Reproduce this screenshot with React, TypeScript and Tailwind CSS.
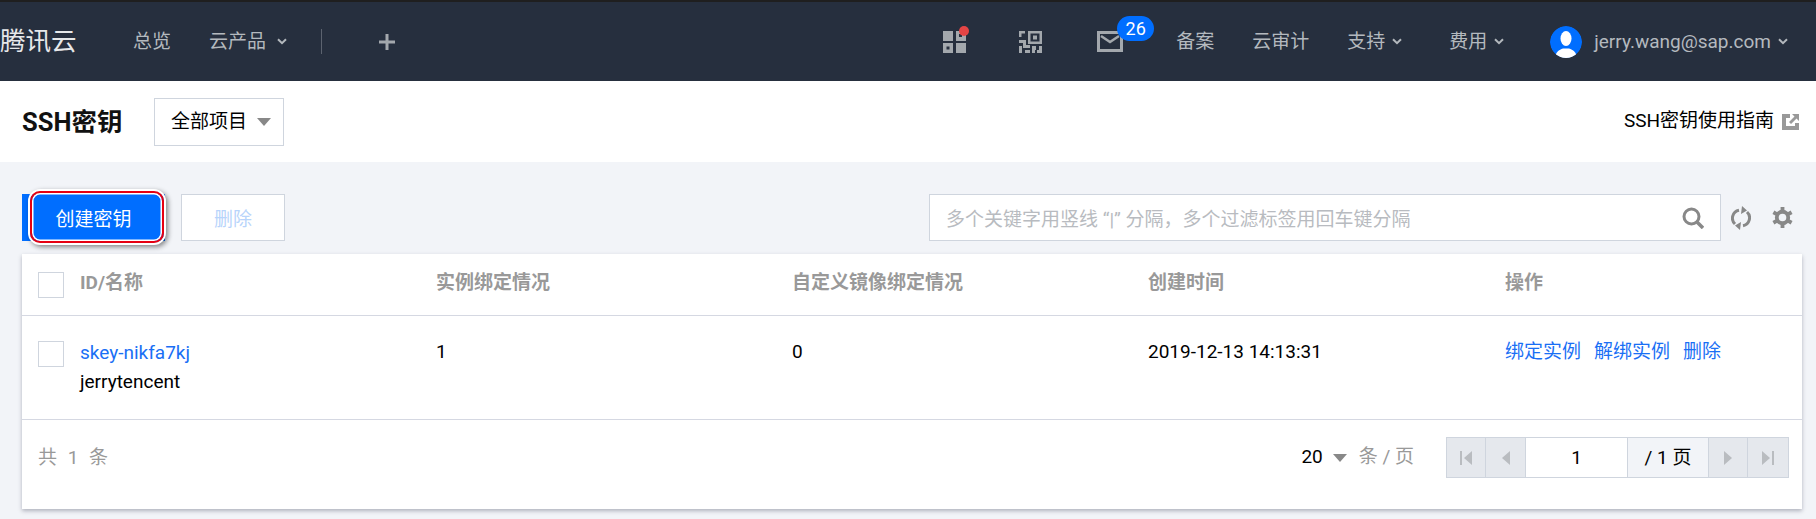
const Chevron = ({ className = "" }: { className?: string }) => (
  <svg viewBox="0 0 10 7" className={`w-[10px] h-[7px] ${className}`}>
    <path d="M1 1.2 5 5.2 9 1.2" fill="none" stroke="#b3b8bd" strokeWidth="2" />
  </svg>
);

const Caret = ({ className = "" }: { className?: string }) => (
  <svg viewBox="0 0 14 8" className={`w-[14px] h-[8px] ${className}`}>
    <path d="M0 0h14L7 8z" fill="#888" />
  </svg>
);

const GridIcon = () => (
  <svg viewBox="0 0 23 22" className="w-[23px] h-[22px]">
    <path d="M0 0h10v10H0zM13 0h10v10H13zM0 12h10v10H0zM13 12h10v10H13z" fill="#a3a8ad" />
    <path d="M3.500 15.500h3v3h-3zM16 3h3v3h-3z" fill="#262f3e" />
  </svg>
);

const QrIcon = () => (
  <svg viewBox="0 0 23 22" className="w-[23px] h-[22px]">
    <path
      d="M0 0h6v2.500H2.500V6H0zM9 0h14v13H9zM0 9h7v5h4v3H4v-5H0zM0 15h3v7H0zM6 19h5v3H6zM13 15h4v4h3v-4h3v7h-5v-3h-2v3h-3z"
      fill="#a3a8ad"
    />
    <path d="M11.500 2.500h9v8h-9z" fill="#262f3e" />
    <path d="M14 4.500h4v4h-4z" fill="#a3a8ad" />
  </svg>
);

const MailIcon = () => (
  <svg viewBox="0 0 26 21" className="w-[26px] h-[21px]">
    <path d="M1.500 1.500h23v18h-23z" fill="none" stroke="#a3a8ad" strokeWidth="3" />
    <path d="M4 5l9 6 9-6" fill="none" stroke="#a3a8ad" strokeWidth="2.500" />
  </svg>
);

const Avatar = () => (
  <svg viewBox="0 0 32 32" className="w-8 h-8 ml-[46px] rounded-full">
    <circle cx="16" cy="16" r="16" fill="#006eff" />
    <ellipse cx="16" cy="12.500" rx="5.500" ry="7.500" fill="#fff" />
    <path d="M5 32c.5-6 4-8 8-9.500h6c4 1.500 7.500 3.500 8 9.500z" fill="#fff" />
  </svg>
);

const ExternalIcon = () => (
  <svg viewBox="0 0 17 16" className="w-[17px] h-4 ml-2">
    <path d="M0 0h8v4H4v8h9V9h4v7H0z" fill="#999" />
    <path d="M10 0h7v7l-2.500-2.500L9 10 7 8l5.500-5.500z" fill="#999" />
  </svg>
);

const SearchIcon = () => (
  <svg viewBox="0 0 22 22" className="w-[22px] h-[22px] mr-[16px]">
    <circle cx="9.500" cy="9.500" r="7.500" fill="none" stroke="#888" strokeWidth="3" />
    <path d="M15 15l6 6" stroke="#888" strokeWidth="3.500" />
  </svg>
);

const RefreshIcon = () => (
  <svg viewBox="0 0 20 24" className="w-5 h-6 ml-[10px]">
    <path d="M4 18A8 8 0 0 1 8 4.300" fill="none" stroke="#888" strokeWidth="3" />
    <path d="M16 6a8 8 0 0 1-4 13.700" fill="none" stroke="#888" strokeWidth="3" />
    <path d="M11 0l5 4.500L10 8zM9 24l-5-4.500 6-3.500z" fill="#888" />
  </svg>
);

const GearIcon = () => (
  <svg viewBox="0 0 22 22" className="w-[21px] h-[21px] ml-[21px]">
    <circle cx="11" cy="11" r="6" fill="none" stroke="#888" strokeWidth="4" />
    <path d="M9 0h4v4H9zM9 18h4v4H9z" fill="#888" />
    <path d="M9 0h4v4H9zM9 18h4v4H9z" fill="#888" transform="rotate(60 11 11)" />
    <path d="M9 0h4v4H9zM9 18h4v4H9z" fill="#888" transform="rotate(120 11 11)" />
  </svg>
);

const Checkbox = () => <div className="w-[26px] h-[26px] bg-white border border-[#cfd5de]" />;

const PageArrow = ({ d, width }: { d: string; width: string }) => (
  <div className={`h-full flex items-center justify-center bg-[#e5e8ed] border-r border-[#cfd5de] ${width}`}>
    <svg viewBox="0 0 12 14" className="w-3 h-[14px]">
      <path d={d} fill="#b9bcc0" />
    </svg>
  </div>
);

export default function App() {
  return (
    <div className="w-[1816px] h-[519px] overflow-hidden bg-[#f2f4f8] text-[19px] text-black font-['Roboto','Noto_Sans_CJK_SC',sans-serif]">
      {/* top nav */}
      <div className="h-[81px] border-t-2 border-[#1f1f1f] bg-[#262f3e] flex items-center text-[#b4b9be]">
        <div className="w-[76px] text-[25.500px] leading-none text-[#e6e8ea] whitespace-nowrap">腾讯云</div>
        <span className="ml-[57px] pt-[2px]">总览</span>
        <span className="ml-[38px] pt-[2px]">云产品</span>
        <Chevron className="ml-[11px]" />
        <div className="ml-[34px] w-px h-[25px] bg-[#5c636f]" />
        <svg viewBox="0 0 16 16" className="ml-[57px] w-4 h-4">
          <path d="M6.500 0h3v6.500H16v3H9.500V16h-3V9.500H0v-3h6.500z" fill="#a3a8ad" />
        </svg>

        <div className="ml-auto flex items-center">
          <div className="relative">
            <GridIcon />
            <div className="absolute -top-[5px] -right-[3px] w-[10px] h-[10px] rounded-full bg-[#e54545]" />
          </div>
          <div className="ml-[53px]">
            <QrIcon />
          </div>
          <div className="ml-[55px] relative">
            <MailIcon />
            <div className="absolute -top-[15px] left-[20px] w-[37px] h-[25px] rounded-full bg-[#006eff] text-white text-[18px] leading-[25px] text-center">
              26
            </div>
          </div>
          <span className="ml-[53px] pt-[2px]">备案</span>
          <span className="ml-[38px] pt-[2px]">云审计</span>
          <span className="ml-[38px] pt-[2px]">支持</span>
          <Chevron className="ml-[7px]" />
          <span className="ml-[47px] pt-[2px]">费用</span>
          <Chevron className="ml-[7px]" />
          <Avatar />
          <span className="ml-3 pt-[2px]">jerry.wang@sap.com</span>
          <Chevron className="ml-[7px] mr-[28px]" />
        </div>
      </div>

      {/* page title */}
      <div className="h-[81px] bg-white flex items-center pl-[22px] pr-[17px]">
        <h1 className="w-[132px] pt-[2px] text-[25.500px] font-bold text-[#111]">SSH密钥</h1>
        <div className="w-[130px] h-12 border border-[#cfd5de] flex items-center pl-[16px]">
          <span className="pt-[2px]">全部项目</span>
          <Caret className="ml-[10px]" />
        </div>
        <span className="ml-auto">SSH密钥使用指南</span>
        <ExternalIcon />
      </div>

      {/* toolbar */}
      <div className="h-[47px] mt-8 mx-[22px] mr-[14px] flex items-center">
        <button className="relative w-[143px] h-full pt-[6px] bg-[#006eff] text-white">
          创建密钥
          <div className="absolute -top-[3px] -bottom-[2px] left-2 right-[1px] rounded-[10px] border-2 border-[#e60012] shadow-[inset_0_0_0_1.500px_#fff,0_0_0_2px_#fff,2px_2px_5px_2px_rgba(0,0,0,0.45)]" />
        </button>
        <button className="ml-4 w-[104px] h-full pt-[6px] bg-white border border-[#cfd5de] text-[#b8d4fb]">删除</button>
        <div className="ml-[644px] w-[792px] h-full bg-white border border-[#cfd5de] flex items-center pl-4">
          <span className="pt-[6px] text-[#b8bbc0]">多个关键字用竖线 “|” 分隔，多个过滤标签用回车键分隔</span>
          <span className="ml-auto flex">
            <SearchIcon />
          </span>
        </div>
        <RefreshIcon />
        <GearIcon />
      </div>

      {/* table */}
      <div className="mt-[13px] mx-[22px] mr-[14px] mb-0 h-[255px] bg-white shadow-[0_2px_4px_0_rgba(54,58,80,0.35)]">
        <div className="h-[62px] border-b border-[#d5d8e2] grid grid-cols-[414px_356px_356px_357px_1fr] items-center font-bold text-[#999]">
          <div className="flex items-center pl-4">
            <Checkbox />
            <span className="ml-4 mb-[3px]">ID/名称</span>
          </div>
          <span className="mb-[3px]">实例绑定情况</span>
          <span className="mb-[3px]">自定义镜像绑定情况</span>
          <span className="mb-[3px]">创建时间</span>
          <span className="mb-[3px]">操作</span>
        </div>
        <div className="h-[104px] border-b border-[#d5d8e2] grid grid-cols-[414px_356px_356px_357px_1fr] pt-[23px]">
          <div className="flex pl-4">
            <div className="mt-[2px]">
              <Checkbox />
            </div>
            <div className="ml-4 -mt-[1px] leading-[29px]">
              <div className="text-[#1a6ff5]">skey-nikfa7kj</div>
              <div>jerrytencent</div>
            </div>
          </div>
          <span className="-mt-[1px] leading-[27px]">1</span>
          <span className="-mt-[1px] leading-[27px]">0</span>
          <span className="-mt-[1px] leading-[27px]">2019-12-13 14:13:31</span>
          <div className="-mt-[1px] leading-[27px] flex gap-[13px] text-[#1a6ff5]">
            <span>绑定实例</span>
            <span>解绑实例</span>
            <span>删除</span>
          </div>
        </div>
        <div className="h-[89px] flex items-start pl-4 pt-[17px]">
          <span className="text-[#999] leading-[41px] tracking-[0.4px] whitespace-pre">共  1  条</span>
          <div className="ml-auto flex items-center h-[41px]">
            <span>20</span>
            <Caret className="ml-[10px] w-[13px]" />
            <span className="ml-[12px] text-[#999]">条 / 页</span>
            <div className="ml-[32px] w-[343px] h-[41px] flex border border-[#cfd5de] mr-[13px]">
              <PageArrow d="M0 0h2v14H0zM4 7l8-7v14z" width="w-[39px]" />
              <PageArrow d="M2 7l8-7v14z" width="w-[40px]" />
              <div className="w-[102px] bg-white border-r border-[#cfd5de] text-center leading-[39px]">1</div>
              <div className="w-[80px] bg-[#f2f4f8] text-center leading-[39px]">/ 1 页</div>
              <PageArrow d="M2 0l8 7-8 7z" width="w-[40px] border-l" />
              <div className="flex-1 h-full flex items-center justify-center bg-[#e5e8ed]">
                <svg viewBox="0 0 12 14" className="w-3 h-[14px]">
                  <path d="M0 0l8 7-8 7zM10 0h2v14h-2z" fill="#b9bcc0" />
                </svg>
              </div>
            </div>
          </div>
        </div>
      </div>
    </div>
  );
}
